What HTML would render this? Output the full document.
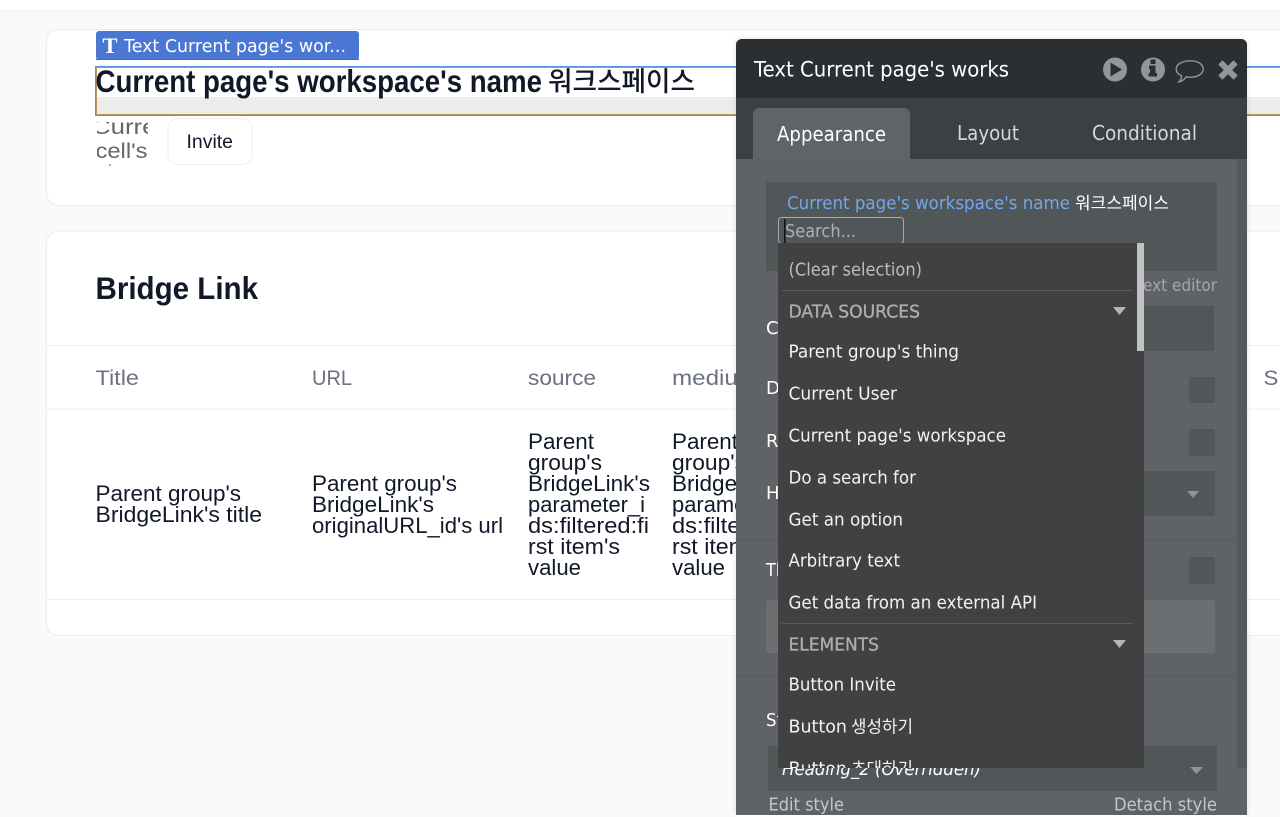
<!DOCTYPE html>
<html><head><meta charset="utf-8"><title>Bubble editor</title>
<style>
html,body{margin:0;padding:0;background:#f9fafb;width:1280px;height:817px;overflow:hidden}
svg{display:block;position:absolute;left:0;top:0}
.i{font-family:"Liberation Sans","Noto Sans CJK KR",sans-serif}
.o{font-family:"DejaVu Sans","Noto Sans CJK KR",sans-serif}
.k{font-family:"Noto Sans CJK KR",sans-serif}
text{white-space:pre}
</style></head><body>
<svg width="1280" height="817" viewBox="0 0 1280 817" xmlns="http://www.w3.org/2000/svg">
<defs>
<clipPath id="c1"><rect x="97" y="122" width="51" height="44"/></clipPath>
<clipPath id="c2"><rect x="778" y="243" width="366" height="525"/></clipPath>
<filter id="s" x="-5%" y="-5%" width="110%" height="110%"><feDropShadow dx="0" dy="0" stdDeviation="3" flood-color="#000" flood-opacity=".12"/></filter>
</defs>
<rect width="1280" height="817" fill="#f9fafb"/>
<rect width="1280" height="11" fill="#fff"/>
<rect y="10.500" width="1280" height="1" fill="#ebecee"/>

<!-- card 1 -->
<rect x="46.500" y="29.500" width="1300" height="176" rx="12" fill="#fff" stroke="#eaecef"/>
<rect x="96" y="31" width="263" height="29" rx="3" fill="#4a76d4"/>
<rect x="96" y="59" width="263" height="1" fill="#3f68c2"/>
<text x="102.500" y="53" font-family="Liberation Serif,serif" font-weight="700" font-size="22" fill="#fff" textLength="15" lengthAdjust="spacingAndGlyphs">T</text>
<text class="o" x="124" y="52" font-size="18" fill="#fff" textLength="222" lengthAdjust="spacingAndGlyphs">Text Current page's wor...</text>

<rect x="95" y="67" width="1190" height="30" fill="#fff"/>
<rect x="96" y="97" width="1190" height="17" fill="#ececec"/>
<rect x="96.500" y="67.500" width="1190" height="47" fill="none" stroke="#bd9560" stroke-width="1"/>
<rect x="95.500" y="66.500" width="1190" height="49" fill="none" stroke="#5b93de" stroke-width="1"/>
<text class="i" x="95.500" y="92" font-size="31.500" font-weight="700" fill="#111827" textLength="446.500" lengthAdjust="spacingAndGlyphs">Current page's workspace's name</text>
<text class="k" x="548" y="91" font-size="27" font-weight="500" fill="#111827" textLength="147" lengthAdjust="spacingAndGlyphs">워크스페이스</text>

<g clip-path="url(#c1)" fill="#666">
<text class="i" x="92" y="134" font-size="21" textLength="86" lengthAdjust="spacingAndGlyphs">Current</text>
<text class="i" x="95.500" y="158" font-size="21" textLength="52" lengthAdjust="spacingAndGlyphs">cell's</text>
<rect x="109" y="164" width="2" height="2" fill="#aaa"/>
</g>
<rect x="168" y="118.500" width="84" height="46" rx="10" fill="#fff" stroke="#eceef0"/>
<text class="i" x="186.500" y="148" font-size="19" fill="#111827" textLength="46.500" lengthAdjust="spacingAndGlyphs">Invite</text>

<!-- card 2 -->
<rect x="46.500" y="231" width="1300" height="404.500" rx="12" fill="#fff" stroke="#eaecef"/>
<rect x="47" y="345" width="1233" height="1" fill="#eceef0"/>
<rect x="47" y="408.500" width="1233" height="1" fill="#eceef0"/>
<rect x="47" y="599" width="1233" height="1" fill="#eceef0"/>
<text class="i" x="95.500" y="299" font-size="31.500" font-weight="700" fill="#111827" textLength="162.500" lengthAdjust="spacingAndGlyphs">Bridge Link</text>
<g class="i" font-size="21" fill="#6b7280">
<text x="95.500" y="385" textLength="43.500" lengthAdjust="spacingAndGlyphs">Title</text>
<text x="312" y="385" textLength="40" lengthAdjust="spacingAndGlyphs">URL</text>
<text x="528" y="385" textLength="68" lengthAdjust="spacingAndGlyphs">source</text>
<text x="672" y="385" textLength="86" lengthAdjust="spacingAndGlyphs">medium</text>
<text x="1263.500" y="385" textLength="21" lengthAdjust="spacingAndGlyphs">SI</text>
</g>
<g class="i" font-size="22" fill="#111827">
<text x="95.500" y="501" textLength="145.500" lengthAdjust="spacingAndGlyphs">Parent group's</text>
<text x="95.500" y="522" textLength="166.500" lengthAdjust="spacingAndGlyphs">BridgeLink's title</text>
<text x="312" y="491" textLength="145" lengthAdjust="spacingAndGlyphs">Parent group's</text>
<text x="312" y="512" textLength="122" lengthAdjust="spacingAndGlyphs">BridgeLink's</text>
<text x="312" y="533" textLength="191" lengthAdjust="spacingAndGlyphs">originalURL_id's url</text>
<text x="528" y="449" textLength="66" lengthAdjust="spacingAndGlyphs">Parent</text>
<text x="528" y="470" textLength="74" lengthAdjust="spacingAndGlyphs">group's</text>
<text x="528" y="491" textLength="122" lengthAdjust="spacingAndGlyphs">BridgeLink's</text>
<text x="528" y="512" textLength="117" lengthAdjust="spacingAndGlyphs">parameter_i</text>
<text x="528" y="533" textLength="121" lengthAdjust="spacingAndGlyphs">ds:filtered:fi</text>
<text x="528" y="554" textLength="92" lengthAdjust="spacingAndGlyphs">rst item's</text>
<text x="528" y="575" textLength="53" lengthAdjust="spacingAndGlyphs">value</text>
<text x="672" y="449" textLength="66" lengthAdjust="spacingAndGlyphs">Parent</text>
<text x="672" y="470" textLength="74" lengthAdjust="spacingAndGlyphs">group's</text>
<text x="672" y="491" textLength="122" lengthAdjust="spacingAndGlyphs">BridgeLink's</text>
<text x="672" y="512" textLength="117" lengthAdjust="spacingAndGlyphs">parameter_i</text>
<text x="672" y="533" textLength="121" lengthAdjust="spacingAndGlyphs">ds:filtered:fi</text>
<text x="672" y="554" textLength="92" lengthAdjust="spacingAndGlyphs">rst item's</text>
<text x="672" y="575" textLength="53" lengthAdjust="spacingAndGlyphs">value</text>
</g>

<!-- panel -->
<g filter="url(#s)">
<path d="M736 815V45a6 6 0 0 1 6-6H1241a6 6 0 0 1 6 6V815Z" fill="#5f6467"/>
</g>
<path d="M736 98V45a6 6 0 0 1 6-6H1241a6 6 0 0 1 6 6V98Z" fill="#2b2f32"/>
<rect x="736" y="98" width="511" height="61" fill="#3c4043"/>
<path d="M753 159V114a6 6 0 0 1 6-6H904a6 6 0 0 1 6 6V159Z" fill="#5f6467"/>
<rect x="1237" y="159" width="10" height="609" fill="#55595c"/>
<rect x="736" y="539" width="501" height="1" fill="#565b5e"/>
<rect x="736" y="675" width="501" height="1" fill="#565b5e"/>

<text class="o" x="754" y="76.500" font-size="21" fill="#fff" textLength="255" lengthAdjust="spacingAndGlyphs">Text Current page's works</text>
<!-- play -->
<circle cx="1115" cy="69.500" r="12" fill="#8f9799"/>
<path d="M1110.500 62.500L1122 69.500L1110.500 76.500Z" fill="#2b2f32"/>
<!-- info -->
<circle cx="1153" cy="69.500" r="12" fill="#8f9799"/>
<path d="M1150.500 59.500h5v4.500h-5ZM1149 65.500h6.500v7.500h1.500v3.500h-8.500v-3.500h1.500v-4h-1Z" fill="#2b2f32"/>
<!-- comment -->
<path d="M1190.500 60.800c7.300 0 12.700 3.500 12.700 8.200s-5.400 8.200-12.700 8.200c-1.500 0-2.900-.1-4.200-.4-1.500 2.200-4 4.300-7.300 5 1.500-1.500 2.500-3.600 2.600-6-3.500-1.500-5.400-4-5.400-6.800 0-4.700 5.900-8.200 14.300-8.200Z" fill="none" stroke="#8f9799" stroke-width="1.400"/>
<!-- x -->
<path d="M1222.500 64.500l11 11M1233.500 64.500l-11 11" stroke="#8f9799" stroke-width="6" stroke-linecap="square"/>

<text class="o" x="777" y="141" font-size="20" fill="#fff" textLength="109" lengthAdjust="spacingAndGlyphs">Appearance</text>
<text class="o" x="957" y="140" font-size="20" fill="#d5d7d8" textLength="62" lengthAdjust="spacingAndGlyphs">Layout</text>
<text class="o" x="1092" y="140" font-size="20" fill="#d5d7d8" textLength="105" lengthAdjust="spacingAndGlyphs">Conditional</text>

<rect x="766" y="182" width="451" height="89" fill="#515659"/>
<text class="o" x="787" y="209" font-size="18" fill="#6fa8ec" textLength="283" lengthAdjust="spacingAndGlyphs">Current page's workspace's name</text>
<text class="k" x="1075" y="209" font-size="17" fill="#fff" textLength="94" lengthAdjust="spacingAndGlyphs">워크스페이스</text>
<rect x="778.500" y="217.500" width="125" height="26" rx="3" fill="none" stroke="#a9acae"/>
<text class="o" x="785" y="237" font-size="18" fill="#aeb1b3" textLength="71" lengthAdjust="spacingAndGlyphs">Search...</text>
<rect x="784" y="219" width="1.500" height="24" fill="#111"/>
<text class="o" x="1143" y="291" font-size="16.500" fill="#a5a8aa" textLength="74" lengthAdjust="spacingAndGlyphs">ext editor</text>

<g class="o" font-size="18" fill="#fff">
<text x="766" y="334">C</text>
<text x="766" y="394">D</text>
<text x="766" y="447">R</text>
<text x="766" y="499">H</text>
<text x="766" y="576" textLength="20" lengthAdjust="spacingAndGlyphs">Th</text>
<text x="766" y="726" textLength="17" lengthAdjust="spacingAndGlyphs">St</text>
</g>

<rect x="1140" y="306" width="74" height="45" fill="#515659"/>
<rect x="1189" y="377" width="26" height="26" fill="#515659"/>
<rect x="1189" y="429" width="26" height="27" fill="#515659"/>
<rect x="1140" y="471" width="75" height="45" fill="#515659"/>
<path d="M1187 491h12l-6 7Z" fill="#8f9395"/>
<rect x="1189" y="557" width="26" height="27" fill="#515659"/>
<rect x="766" y="600" width="449" height="53" rx="3" fill="#6b6f72"/>

<rect x="768" y="746" width="449" height="45" fill="#515659"/>
<text class="o" x="782" y="775" font-size="18" font-style="italic" fill="#fff" textLength="199" lengthAdjust="spacingAndGlyphs">Heading_2 (Overridden)</text>
<path d="M1190 767h13l-6.500 7Z" fill="#8f9395"/>
<text class="o" x="768.500" y="810.500" font-size="17.500" fill="#c4c6c7" textLength="75.500" lengthAdjust="spacingAndGlyphs">Edit style</text>
<text class="o" x="1114" y="810.500" font-size="17.500" fill="#c4c6c7" textLength="103" lengthAdjust="spacingAndGlyphs">Detach style</text>

<!-- dropdown -->
<rect x="778" y="243" width="366" height="525" fill="#414141"/>
<rect x="1137" y="243" width="7" height="108" fill="#c2c2c2"/>
<rect x="782" y="290" width="351" height="1" fill="#5a5c5c"/>
<rect x="782" y="623" width="351" height="1" fill="#5a5c5c"/>
<g clip-path="url(#c2)">
<g class="o" font-size="18" fill="#f2f2f2">
<text x="788.500" y="275.500" fill="#bdbdbd" textLength="133.500" lengthAdjust="spacingAndGlyphs">(Clear selection)</text>
<text x="788.500" y="357.500" textLength="170.500" lengthAdjust="spacingAndGlyphs">Parent group's thing</text>
<text x="788.500" y="399.500" textLength="108.500" lengthAdjust="spacingAndGlyphs">Current User</text>
<text x="788.500" y="441.500" textLength="217.500" lengthAdjust="spacingAndGlyphs">Current page's workspace</text>
<text x="788.500" y="483.500" textLength="127.500" lengthAdjust="spacingAndGlyphs">Do a search for</text>
<text x="788.500" y="525.500" textLength="114.500" lengthAdjust="spacingAndGlyphs">Get an option</text>
<text x="788.500" y="566.500" textLength="111.500" lengthAdjust="spacingAndGlyphs">Arbitrary text</text>
<text x="788.500" y="608.500" textLength="248.500" lengthAdjust="spacingAndGlyphs">Get data from an external API</text>
<text x="788.500" y="690.500" textLength="107.500" lengthAdjust="spacingAndGlyphs">Button Invite</text>
<text x="788.500" y="732.500" textLength="58.500" lengthAdjust="spacingAndGlyphs">Button</text>
<text class="k" x="851" y="732.500" font-size="17" textLength="62" lengthAdjust="spacingAndGlyphs">생성하기</text>
<text x="788.500" y="774.500" textLength="58.500" lengthAdjust="spacingAndGlyphs">Button</text>
<text class="k" x="851" y="774.500" font-size="17" textLength="62" lengthAdjust="spacingAndGlyphs">초대하기</text>
</g>
<text class="o" x="788.500" y="317.500" font-size="18" fill="#adadad" stroke="#adadad" stroke-width=".35" textLength="131.500" lengthAdjust="spacingAndGlyphs">DATA SOURCES</text>
<text class="o" x="788.500" y="650.500" font-size="18" fill="#adadad" stroke="#adadad" stroke-width=".35" textLength="90.500" lengthAdjust="spacingAndGlyphs">ELEMENTS</text>
<path d="M1113 307h13l-6.500 8Z" fill="#b5b5b5"/>
<path d="M1113 640h13l-6.500 8Z" fill="#b5b5b5"/>
</g>
<rect x="0" y="815" width="1280" height="2" fill="#f9fafb"/>
<rect x="736" y="815" width="511" height="2" fill="#fff"/>
</svg>
</body></html>
